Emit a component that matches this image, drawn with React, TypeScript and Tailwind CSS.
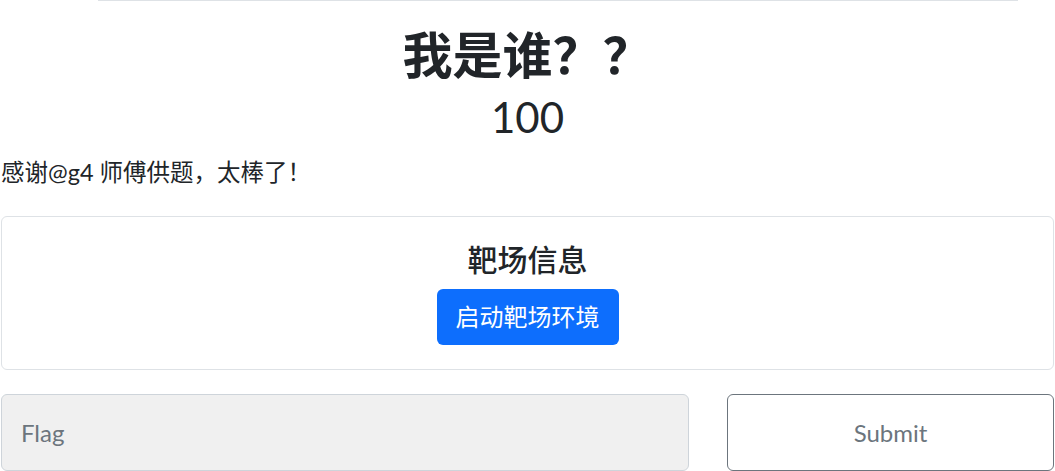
export default function App() {
    return (
        <div className="min-h-[471px] bg-white text-[#212529] font-['Lato','Noto_Sans_CJK_SC',sans-serif]">
            <div className="ml-[98px] w-[920px] border-t border-[#dee2e6]" />
            <h2 className="mt-[24px] text-center text-[50px] font-bold leading-[60px]">我是谁？？</h2>
            <h3 className="mt-[6px] text-center text-[42px] font-normal leading-[52px]">100</h3>
            <p className="mt-[12px] pl-[1px] text-[23.5px] leading-[34px]">感谢@g4 师傅供题，太棒了！</p>
            <div className="mx-[1px] mt-[27px] flex h-[154px] flex-col items-center rounded-[6px] border border-[#dee2e6] pt-[24px]">
                <h4 className="text-[30px] font-medium leading-[36px]">靶场信息</h4>
                <button className="mt-[12px] h-[56px] rounded-[6px] bg-[#0d6efd] px-[19px] text-[24px] text-white">
                    启动靶场环境
                </button>
            </div>
            <div className="mx-[1px] mt-[24px] flex gap-[38px]">
                <input
                    placeholder="Flag"
                    className="h-[77px] flex-1 rounded-[6px] border border-[#ced4da] bg-[#f0f0f0] px-[19px] text-[24px] placeholder:text-[#6c757d] outline-none"
                />
                <button className="h-[77px] w-[327px] rounded-[6px] border border-[#6c757d] bg-white text-[24px] text-[#6c757d]">
                    Submit
                </button>
            </div>
        </div>
    );
}
